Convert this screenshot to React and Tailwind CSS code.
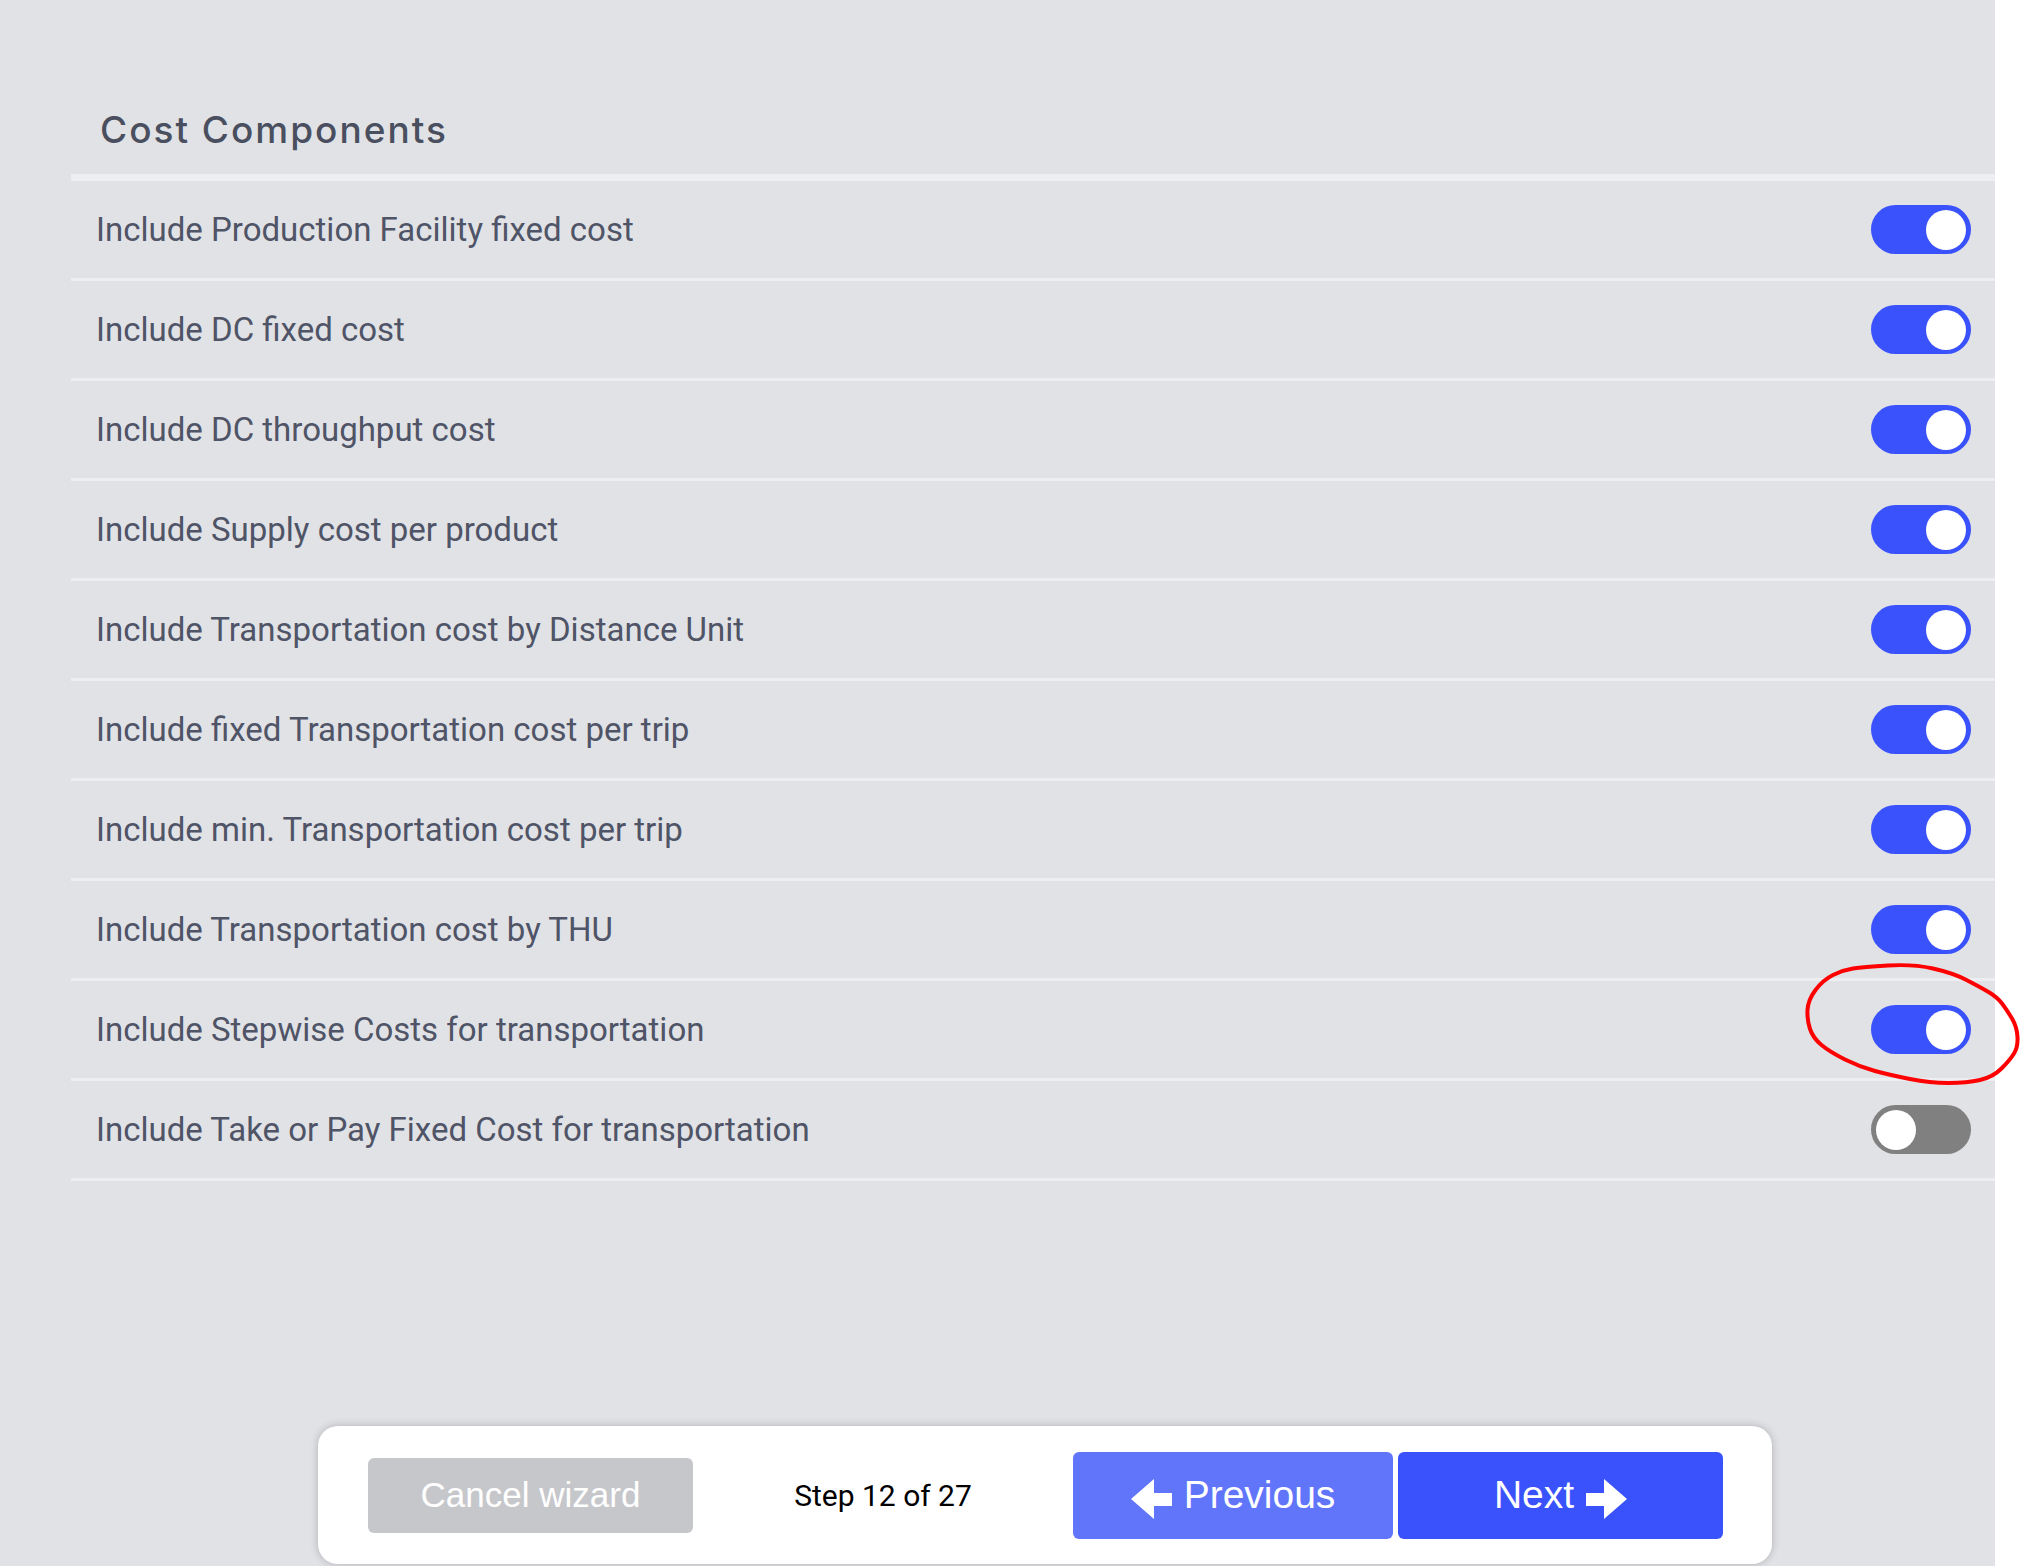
import React from "react";

const options = [
  { label: "Include Production Facility fixed cost", on: true },
  { label: "Include DC fixed cost", on: true },
  { label: "Include DC throughput cost", on: true },
  { label: "Include Supply cost per product", on: true },
  { label: "Include Transportation cost by Distance Unit", on: true },
  { label: "Include fixed Transportation cost per trip", on: true },
  { label: "Include min. Transportation cost per trip", on: true },
  { label: "Include Transportation cost by THU", on: true },
  { label: "Include Stepwise Costs for transportation", on: true },
  { label: "Include Take or Pay Fixed Cost for transportation", on: false },
];

// hand drawn red mark around the stepwise toggle
const markPoints = [
  [1863, 967], [1913, 964], [1953, 973], [1980, 987], [1997, 997],
  [2007, 1010], [2017, 1027], [2018, 1047], [2010, 1060], [1993, 1077],
  [1967, 1083], [1930, 1083], [1890, 1075], [1860, 1067], [1830, 1052],
  [1813, 1038], [1807, 1020], [1808, 1000], [1823, 980], [1843, 970],
];

function smoothPath(points) {
  const n = points.length;
  const mid = (a, b) => [(a[0] + b[0]) / 2, (a[1] + b[1]) / 2];
  const start = mid(points[0], points[1]);
  let d = `M${start[0]} ${start[1]}`;
  for (let i = 1; i <= n; i++) {
    const p = points[i % n];
    const m = mid(p, points[(i + 1) % n]);
    d += ` Q${p[0]} ${p[1]} ${m[0]} ${m[1]}`;
  }
  return d;
}

function Toggle({ on }) {
  return (
    <div
      className={`relative h-[49px] w-[100px] shrink-0 rounded-full ${on ? "bg-[#3a52fb]" : "bg-[#808080]"}`}
    >
      <div
        className={`absolute top-[4.5px] h-[40px] w-[40px] rounded-full bg-white ${on ? "left-[55px]" : "left-[5px]"}`}
      />
    </div>
  );
}

function ArrowIcon({ left }) {
  return (
    <svg width="41" height="40" viewBox="0 0 41 40" className={`mt-[7px] shrink-0 ${left ? "-scale-x-100" : ""}`}>
      <polygon points="0,14 18,14 18,0 41,20 18,40 18,27 0,27" fill="#ffffff" />
    </svg>
  );
}

function App() {
  return (
    <div className="relative flex h-[1566px] w-full overflow-hidden bg-white">
      <div className="flex h-full w-[1995px] shrink-0 flex-col bg-[#e1e2e6] pl-[71px]">
        <div className="border-b-[7px] border-[#eceef2] pb-[26px] pl-[29px] pt-[111px]">
          <h1 className="font-['Inter',sans-serif] text-[37px] font-medium leading-[37px] tracking-[2px] text-[#4a4f5f]">
            Cost Components
          </h1>
        </div>

        {options.map((item) => (
          <div
            key={item.label}
            className="flex h-[100px] items-center justify-between border-b-[3px] border-[#eceef2] pl-[25px] pr-[24px]"
          >
            <span className="font-['Roboto',sans-serif] text-[33px] text-[#4f5466]">{item.label}</span>
            <Toggle on={item.on} />
          </div>
        ))}

        <div className="flex-1" />

        <div className="mb-[2px] ml-[247px] flex h-[138px] w-[1454px] items-center justify-between rounded-[20px] bg-white pl-[50px] pr-[49px] shadow-[0_0_8px_rgba(0,0,0,0.22)]">
          <button className="h-[75px] w-[325px] rounded-[6px] bg-[#c6c7cb] font-['Liberation_Sans',Arial,sans-serif] text-[35px] text-white">
            Cancel wizard
          </button>
          <span className="font-['Roboto',sans-serif] text-[30px] text-black">Step 12 of 27</span>
          <div className="flex gap-[5px]">
            <button className="flex h-[87px] w-[320px] items-center justify-center gap-[12px] rounded-[6px] bg-[#6175fb] font-['Liberation_Sans',Arial,sans-serif] text-[39px] text-white">
              <ArrowIcon left />
              <span>Previous</span>
            </button>
            <button className="flex h-[87px] w-[325px] items-center justify-center gap-[12px] rounded-[6px] bg-[#3a52fb] font-['Liberation_Sans',Arial,sans-serif] text-[39px] text-white">
              <span>Next</span>
              <ArrowIcon />
            </button>
          </div>
        </div>
      </div>
      <div className="flex-1 bg-white" />

      <svg
        className="pointer-events-none absolute left-0 top-0"
        width="2020"
        height="1566"
        viewBox="0 0 2020 1566"
      >
        <path
          d={smoothPath(markPoints)}
          fill="none"
          stroke="#ff0000"
          strokeWidth="4"
          strokeLinejoin="round"
          strokeLinecap="round"
        />
      </svg>
    </div>
  );
}

export default App;
